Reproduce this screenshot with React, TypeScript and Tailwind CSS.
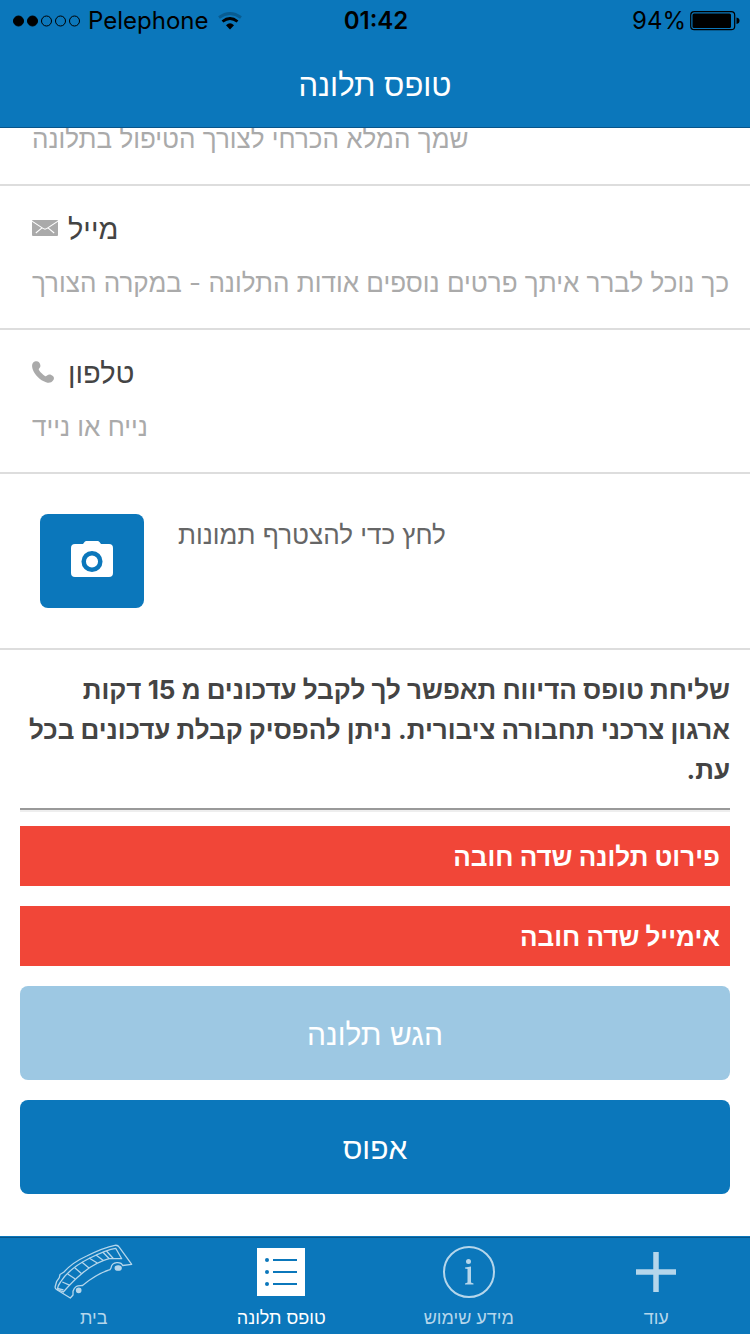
import type { ReactNode } from 'react';

const MailIcon = () => (
  <svg className="h-4 w-[26px]" viewBox="0 0 26 16" aria-hidden="true">
    <rect width="26" height="16" rx="1" fill="#aaa" />
    <path d="M0 1.2 11 8.4Q13 9.8 15 8.4L26 1.2M3.8 13 10 7.8M22.2 13 16 7.8" fill="none" stroke="#fff" strokeWidth="1.1" />
  </svg>
);

const PhoneIcon = () => (
  <svg className="h-[22px] w-[22px]" viewBox="0 0 22 22" aria-hidden="true">
    <path d="M1.2 1.6C2.8-.2 5.8-.3 7 1.2 8.600 3.200 9 5.400 7.500 7 6.700 7.900 6.500 8.300 7.100 9.300 8.600 11.600 10.600 13.400 12.900 14.900 13.600 15.300 14.200 15.200 15 14.500 16.900 12.800 19 13.300 20.900 15 22.300 16.400 22.300 18 21 19.600 19.300 22 16.900 22.300 14 21.300 8 19.200 2.600 13.800.6 8-.2 5.300-.2 3.200 1.200 1.600Z" fill="#aaa" />
  </svg>
);

function Field({ id, label, name, icon, type, placeholder }: {
  id: string; label?: string; name?: string; icon?: ReactNode; type: string; placeholder: string;
}) {
  return (
    <div className="flex h-36 shrink-0 flex-col justify-end border-b-2 border-[#ddd] pb-5 pl-8">
      {label && (
        <label htmlFor={id} className="flex h-[54px] items-center text-[29px] leading-10 text-[#444]">
          <span className="flex w-9 shrink-0 pb-0.5">{icon}</span>
          {label}
        </label>
      )}
      <input
        id={id}
        type={type}
        aria-label={name}
        placeholder={placeholder}
        className="h-[52px] w-full bg-transparent text-[26px] text-[#444] outline-none placeholder:text-[#aaa]"
      />
    </div>
  );
}

const Alert = ({ children }: { children: ReactNode }) => (
  <p role="alert" dir="rtl" className="flex h-[60px] items-center bg-[#f14638] px-2.5 text-[26px] font-bold text-white">
    {children}
  </p>
);

const BusIcon = () => (
  <svg className="h-14 w-20" viewBox="0 0 80 56" fill="none" stroke="currentColor" strokeWidth="1.3" strokeLinejoin="round" aria-hidden="true">
    <path d="M16.300 54 2.500 45.500Q.8 44.500 1.200 42.500L2.700 37.300 5.300 33.700 6 30.500 10 28C17 20 25 15.500 32.700 12 42 7.300 52 3 61 1.300Q64 .9 65.200 3.200L77.700 20.300 68.700 21.500C67.500 17.800 58 16.500 57 24L56 25.700C46 28.800 37 34.500 28.500 41.500 25 42 21 40.500 19 47.300V51Z" />
    <path d="M3.300 45.300Q3.500 42 6.500 38C12 29 20 22 36 14 45 9.500 53 5.500 61.700 4.300L67.700 14.700H55C44 17.800 35 23.500 27.700 29.700 20 36 15 41.500 9.300 48L3.300 45.300Z" />
    <path d="M8.300 38 16 41.300M13.700 30 21.300 35M20.700 23.700 27.700 29.700M27.700 18 35 24M35 14 43.300 19M42 11 49.300 16.500M48.700 8 55.300 14.700M52.500 7 59.500 14.700M3.300 44.300 9.500 46" />
    <ellipse cx="64.200" cy="24" rx="3" ry="2.200" fill="currentColor" />
    <circle cx="24.700" cy="46.300" r="2.200" fill="currentColor" />
  </svg>
);

const ListIcon = () => (
  <svg className="h-12 w-12" viewBox="0 0 48 48" aria-hidden="true">
    <path fill="#fff" d="M0 0h48v48H0z" />
    <path d="M16 12h24M16 24h24M16 36h24" stroke="#0b77bb" strokeWidth="2" />
    <circle cx="10" cy="12" r="2" fill="#0b77bb" />
    <circle cx="10" cy="24" r="2" fill="#0b77bb" />
    <circle cx="10" cy="36" r="2" fill="#0b77bb" />
  </svg>
);

const InfoIcon = () => (
  <svg className="h-[52px] w-[52px]" viewBox="0 0 52 52" fill="currentColor" aria-hidden="true">
    <circle cx="26" cy="26" r="25" fill="none" stroke="currentColor" strokeWidth="2" />
    <circle cx="25.500" cy="15.500" r="2.500" />
    <path d="M22 21.500 28 20.500V36.500L30.500 37.500V38.500H22V37.500L24.500 36.500V23L22 22.500Z" />
  </svg>
);

const PlusIcon = () => (
  <svg className="h-10 w-10" viewBox="0 0 40 40" aria-hidden="true">
    <path d="M20 0v40M0 20h40" stroke="currentColor" strokeWidth="5.500" />
  </svg>
);

const tabs = [
  { label: 'בית', icon: <BusIcon />, active: false },
  { label: 'טופס תלונה', icon: <ListIcon />, active: true },
  { label: 'מידע שימוש', icon: <InfoIcon />, active: false },
  { label: 'עוד', icon: <PlusIcon />, active: false },
];

export default function App() {
  return (
    <div lang="he" className="flex h-screen flex-col overflow-hidden bg-white font-['Inter','Liberation_Sans',sans-serif] text-[#444]">
      <header className="h-32 shrink-0 border-b border-[#08558a] bg-[#0b77bb]">
        <div className="grid h-[42px] grid-cols-3 items-center pr-2.5 pl-3 text-2xl text-black">
          <div className="flex items-center">
            <svg className="mr-2 h-3 w-[68px] shrink-0" viewBox="0 0 68 12" fill="none" stroke="black" aria-hidden="true">
              <circle cx="6.500" cy="6" r="5" fill="black" />
              <circle cx="20.500" cy="6" r="5" fill="black" />
              <circle cx="34.500" cy="6" r="5" />
              <circle cx="48.500" cy="6" r="5" />
              <circle cx="62.500" cy="6" r="5" />
            </svg>
            <span>Pelephone</span>
            <svg className="ml-2.5 h-[18px] w-6 shrink-0" viewBox="0 0 24 18" fill="none" strokeWidth="2.800" aria-hidden="true">
              <path d="M1 5.500Q12-2.500 23 5.500" stroke="#085c91" />
              <path d="M4.500 9.500Q12 3.500 19.500 9.500" stroke="black" />
              <path d="M8 13.200Q12 9.500 16 13.200L12 17.500Z" fill="black" />
            </svg>
          </div>
          <span className="text-center font-semibold">01:42</span>
          <div className="flex items-center justify-end gap-1">
            <span>94%</span>
            <svg className="h-5 w-[50px]" viewBox="0 0 50 20" aria-hidden="true">
              <rect x=".7" y=".7" width="44" height="18" rx="3.500" fill="none" stroke="black" strokeWidth="1.200" />
              <rect x="2.500" y="2.500" width="38.500" height="14.500" rx="1.500" />
              <path d="M46.500 6.500Q49.500 7 49.500 9.700T46.500 13Z" />
            </svg>
          </div>
        </div>
        <h1 className="flex h-[86px] items-center justify-center text-[31px] font-normal text-white">טופס תלונה</h1>
      </header>

      <main className="flex min-h-0 flex-1 flex-col justify-end overflow-hidden pb-[42px]">
        <Field id="full-name" name="שמך המלא" type="text" placeholder="שמך המלא הכרחי לצורך הטיפול בתלונה" />
        <Field id="email" label="מייל" icon={<MailIcon />} type="email" placeholder="כך נוכל לברר איתך פרטים נוספים אודות התלונה - במקרה הצורך" />
        <Field id="phone" label="טלפון" icon={<PhoneIcon />} type="tel" placeholder="נייח או נייד" />

        <div className="flex h-44 shrink-0 items-start gap-[34px] border-b-2 border-[#ddd] px-10 pt-10">
          <button type="button" aria-labelledby="photo-hint" className="flex h-[94px] w-[104px] shrink-0 items-center justify-center rounded-lg bg-[#0b77bb] pb-1">
            <svg className="h-9 w-[42px]" viewBox="0 0 42 36" aria-hidden="true">
              <path d="M4 3h8l1.500-2Q14.200 0 15.500 0h11Q27.800 0 28.500 1L30 3h8q4 0 4 4v25q0 4-4 4H4q-4 0-4-4V7q0-4 4-4Z" fill="#fff" />
              <circle cx="21" cy="20.500" r="8.300" fill="none" stroke="#0b77bb" strokeWidth="4.500" />
            </svg>
          </button>
          <p id="photo-hint" className="text-[26px] leading-[42px] text-[#666]">לחץ כדי להצטרף תמונות</p>
        </div>

        <section className="flex shrink-0 flex-col gap-5 px-5 pt-5">
          <div>
            <p dir="rtl" className="text-[26px] leading-10 font-bold">
              שליחת טופס הדיווח תאפשר לך לקבל עדכונים מ 15 דקות ארגון צרכני תחבורה ציבורית. ניתן להפסיק קבלת עדכונים בכל עת.
            </p>
            <hr className="mt-[18px] mb-3.5 h-1 border-t-2 border-b-2 border-t-[#999] border-b-[#eee]" />
            <Alert>פירוט תלונה שדה חובה</Alert>
          </div>
          <Alert>אימייל שדה חובה</Alert>
          <button type="submit" className="h-[94px] rounded-lg bg-[#9dc8e3] pt-0.5 text-3xl text-white">הגש תלונה</button>
          <button type="reset" className="h-[94px] rounded-lg bg-[#0b77bb] pt-0.5 text-3xl text-white">אפוס</button>
        </section>
      </main>

      <nav className="shrink-0 bg-[#0b77bb] pt-px">
        <div className="grid h-[97px] grid-cols-4 border-t border-[#08558a]">
          {tabs.map((tab) => (
            <a
              key={tab.label}
              href="#"
              aria-current={tab.active ? 'page' : undefined}
              className={tab.active ? 'flex flex-col items-center text-white' : 'flex flex-col items-center text-[#b5d6eb]'}
            >
              <span className="flex h-[68px] items-center">{tab.icon}</span>
              <span className="text-lg leading-6">{tab.label}</span>
            </a>
          ))}
        </div>
      </nav>
    </div>
  );
}
